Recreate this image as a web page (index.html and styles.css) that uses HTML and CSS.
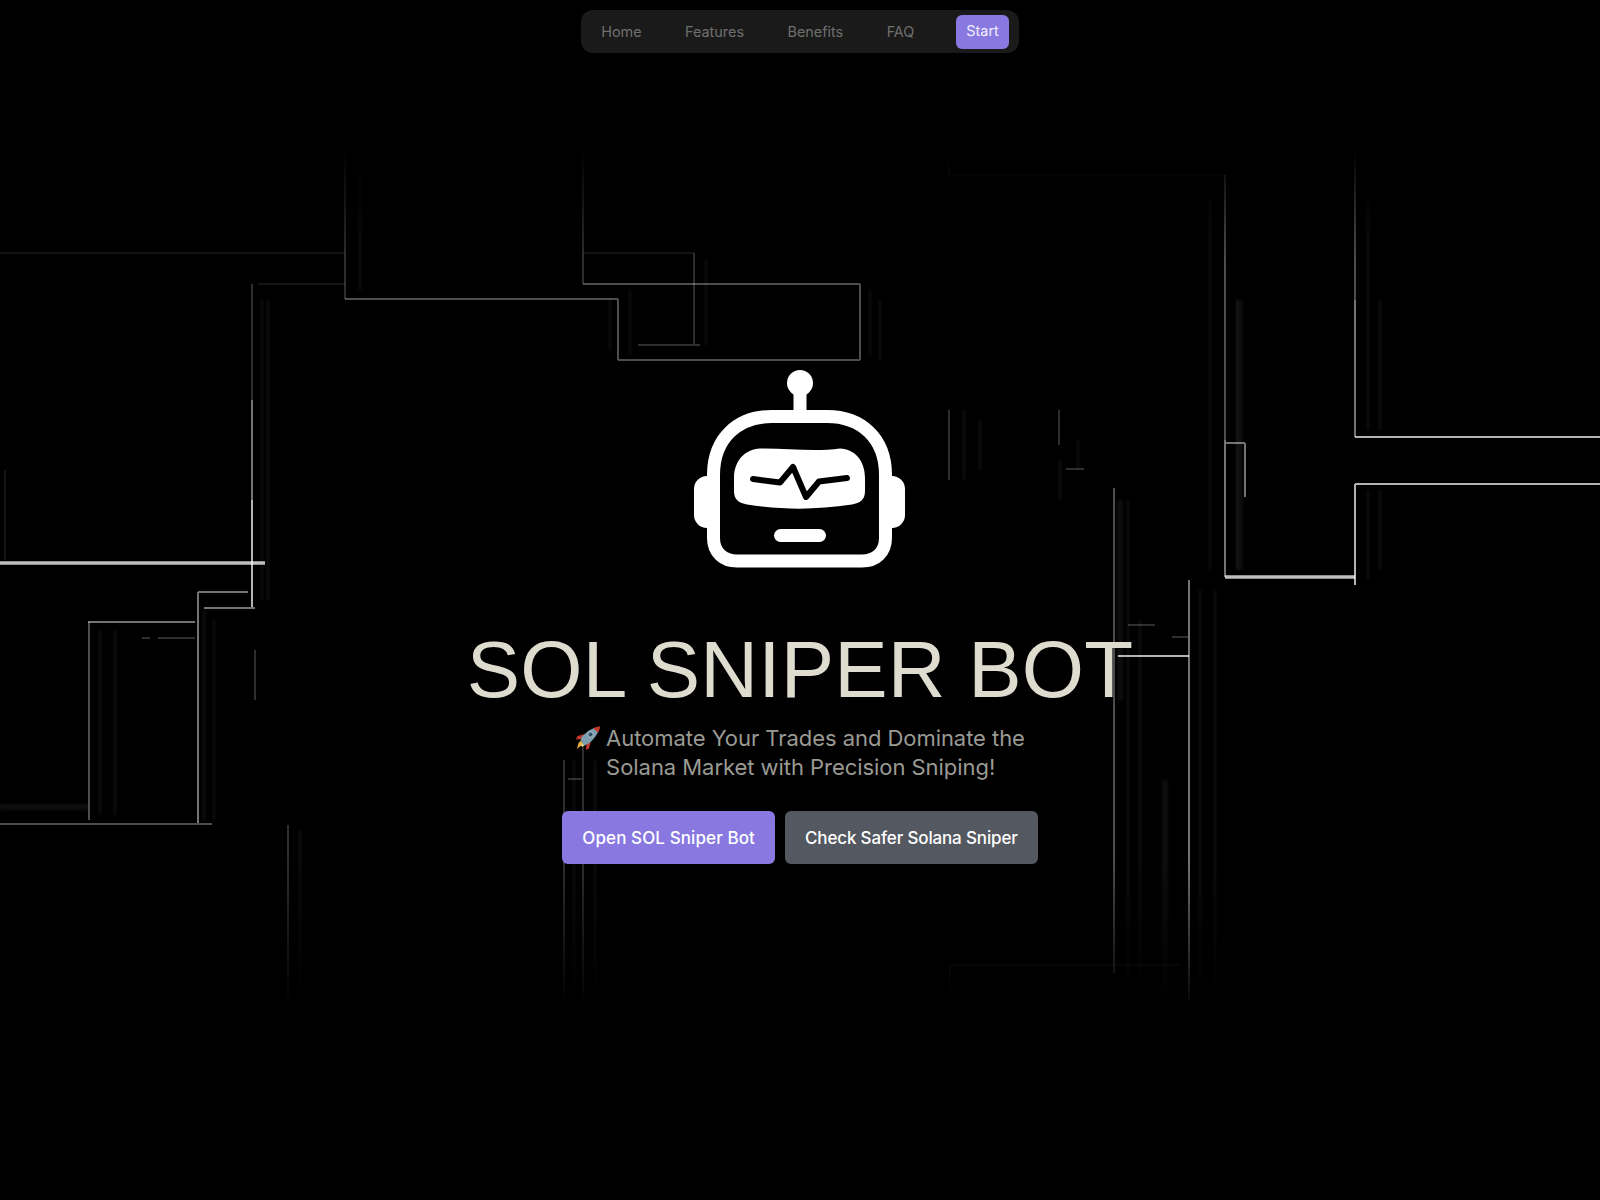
FILE: index.html
```html
<!DOCTYPE html>
<html lang="en">
<head>
    <meta charset="UTF-8">
    <meta name="viewport" content="width=device-width, initial-scale=1.0">
    <title>SOL Sniper Bot</title>
    <link rel="stylesheet" href="styles.css">
</head>
<body>
    <!-- circuit lines behind the hero -->
    <svg class="circuit" width="1600" height="1200" viewBox="0 0 1600 1200" aria-hidden="true">
        <g class="ghosts">
            <path d="M262 300V600M268 300V600M360 160V290M610 300V350M630 290V355M706 260V345M870 290V355M880 300V360M964 410V480M980 420V470M1060 460V500M1078 440V470M1210 200V570M1237 300V570M1368 200V430M1380 300V430M1368 490V580M1380 490V570"/>
            <path d="M204 610V820M214 620V820M100 630V815M115 630V815M1128 500V980M1140 620V980M1200 590V1000M1215 590V1000M574 760V1000M595 760V1000M300 830V990"/>
            <path class="thick" d="M0 807H88M1240 300V570M1120 500V700M1165 780V1000"/>
        </g>
        <g class="lines">
            <path class="l1" d="M0 253H345M583 253H694M258 284H345M5 470V560M950 965H1180M949 153V175H1225M950 965V1000"/>
            <path class="l2" d="M345 153V299M583 153V284M694 253V345M638 345H700M949 410V480M1059 410V445M255 650V700M288 825V1000M564 760V1000M583 747V1000M1066 469H1084M1128 625H1155M1172 637H1188M142 638H150M158 638H195M568 779H583M252 284V400"/>
            <path class="l3" d="M345 299H618M583 284H860M618 299V360M618 360H860M860 284V360M1225 175V440M1355 153V300M1114 488V973M0 824H212M89 622V820"/>
            <path class="l4" d="M252 400V500M1225 440V577M1355 300V437M1245 443V497M1225 443H1245M198 592V823M88 622H195M198 592H248M204 608H255M1189 580V1000"/>
            <path class="l5" d="M252 500V607M1355 437H1600M1355 484H1600M1355 484V585M1118 656H1189"/>
            <path class="l6" d="M0 563H265M1225 577H1355"/>
        </g>
    </svg>

    <nav class="nav">
        <a href="#">Home</a>
        <a href="#">Features</a>
        <a href="#">Benefits</a>
        <a href="#">FAQ</a>
        <a href="#" class="nav-start">Start</a>
    </nav>

    <main class="hero">
        <svg class="robot" width="240" height="220" viewBox="0 0 240 220" aria-hidden="true">
            <circle cx="120" cy="23" r="13" fill="#fff"/>
            <rect x="113.5" y="30" width="13" height="24" fill="#fff"/>
            <path d="M14 129a13 13 0 0 1 13-13h8v52h-8a13 13 0 0 1-13-13zM225 129a13 13 0 0 0-13-13h-8v52h8a13 13 0 0 0 13-13z" fill="#fff"/>
            <path d="M33.500 115C33.500 78 58 56.500 92 56.500H147C181 56.500 205.500 78 205.500 115V178C205.500 192 196 201 182 201H57C43 201 33.500 192 33.500 178Z" fill="#000" stroke="#fff" stroke-width="13"/>
            <path d="M54 118C54 101 65 89 80 88.500C105 88 134 92 160 88.500C175 89 185 101 185 118V131C185 140 180 143 172 144.500C135 150 104 150 67 144.500C59 143 54 140 54 131Z" fill="#fff"/>
            <path d="M73 119L100 122.500L113 107L126 137L139 121.500L167 118" fill="none" stroke="#000" stroke-width="6" stroke-linecap="round" stroke-linejoin="round"/>
            <rect x="94" y="169" width="52" height="13" rx="6.500" fill="#fff"/>
        </svg>

        <h1 class="title">SOL SNIPER BOT</h1>

        <p class="tagline">
            <svg class="rocket" width="26" height="26" viewBox="0 0 26 26" aria-hidden="true">
                <path d="M8 19L2 24L3.500 18L6 15.500Z" fill="#e6b23a"/>
                <path d="M6 20L7 22L9.500 20.500L7.500 18Z" fill="#f4e08a"/>
                <path d="M10 9L2.500 11L1 14.500L6.500 14Z" fill="#c23a2e"/>
                <path d="M16 15.500L14 23.500L11 25L11.500 19Z" fill="#c23a2e"/>
                <path d="M5.500 15L9 20.500C15 19 21 12 23 7L19 3C14 5 7 10 5.500 15Z" fill="#7d9db0"/>
                <path d="M18.500 3.300L23 7.700C24.500 5.500 25 3 25 1.500C23 1.500 20.500 2 18.500 3.300Z" fill="#c9382b"/>
                <circle cx="15.500" cy="9.500" r="2.600" fill="#2f5268" stroke="#c5d4dc" stroke-width="0.8"/>
            </svg>
            <span>Automate Your Trades and Dominate the<br>Solana Market with Precision Sniping!</span>
        </p>

        <div class="actions">
            <a href="#" class="btn btn-primary">Open SOL Sniper Bot</a>
            <a href="#" class="btn btn-secondary">Check Safer Solana Sniper</a>
        </div>
    </main>
</body>
</html>
```

FILE: styles.css
```css
body {
    margin: 0;
    height: 1200px;
    overflow: hidden;
    position: relative;
    display: flex;
    flex-direction: column;
    align-items: center;
    background-color: #000000;
    font-family: Inter, "Liberation Sans", sans-serif;
}

.circuit {
    position: absolute;
    top: 0;
    left: 0;
    -webkit-mask-image: linear-gradient(to bottom, transparent 150px, #000 260px, #000 860px, transparent 1010px);
    mask-image: linear-gradient(to bottom, transparent 150px, #000 260px, #000 860px, transparent 1010px);
}

.circuit path {
    fill: none;
    stroke: #ffffff;
}

.circuit .lines {
    filter: blur(0.6px);
}

.circuit .ghosts {
    filter: blur(1.2px);
}

.circuit .ghosts path {
    stroke-opacity: 0.07;
    stroke-width: 2;
}

.circuit .ghosts .thick {
    stroke-opacity: 0.05;
    stroke-width: 6;
}

.circuit .l1 { stroke-opacity: 0.08; stroke-width: 2; }
.circuit .l2 { stroke-opacity: 0.18; stroke-width: 2; }
.circuit .l3 { stroke-opacity: 0.3; stroke-width: 2; }
.circuit .l4 { stroke-opacity: 0.45; stroke-width: 2; }
.circuit .l5 { stroke-opacity: 0.7; stroke-width: 2; }
.circuit .l6 { stroke-opacity: 0.75; stroke-width: 3.5; }

.nav {
    position: relative;
    display: flex;
    align-items: center;
    gap: 43.5px;
    margin-top: 10px;
    height: 43px;
    padding: 0 10px 0 20px;
    box-sizing: border-box;
    background-color: #1a1a1a;
    border-radius: 12px;
    font-size: 14.4px;
}

.nav a {
    color: #6f6f6f;
    text-decoration: none;
}

.nav .nav-start {
    margin-left: -1.5px;
    padding: 7px 10px 9px;
    background-color: #8878e0;
    border-radius: 6px;
    color: #f2f0ff;
    line-height: 18px;
}

.hero {
    position: relative;
    display: flex;
    flex-direction: column;
    align-items: center;
    margin-top: 307px;
}

.robot {
    display: block;
}

.title {
    margin: 44px 0 0;
    font-family: "Liberation Sans", Arial, sans-serif;
    font-size: 80px;
    font-weight: 400;
    letter-spacing: 0.2px;
    line-height: 92px;
    color: #dedbcf;
}

.tagline {
    display: flex;
    gap: 5px;
    margin: 8px 0 0;
    font-size: 22px;
    letter-spacing: -0.05px;
    line-height: 29px;
    color: #9a9a94;
}

.rocket {
    flex: none;
    margin-top: 1px;
}

.actions {
    display: flex;
    gap: 10px;
    margin-top: 29px;
}

.btn {
    display: block;
    height: 53px;
    padding: 0 20px;
    line-height: 55px;
    border-radius: 6px;
    font-size: 17px;
    font-weight: 500;
    color: #ffffff;
    text-decoration: none;
}

.btn-primary {
    background-color: #8878e0;
    letter-spacing: 0.1px;
}

.btn-secondary {
    background-color: #545860;
    letter-spacing: -0.15px;
}
```
